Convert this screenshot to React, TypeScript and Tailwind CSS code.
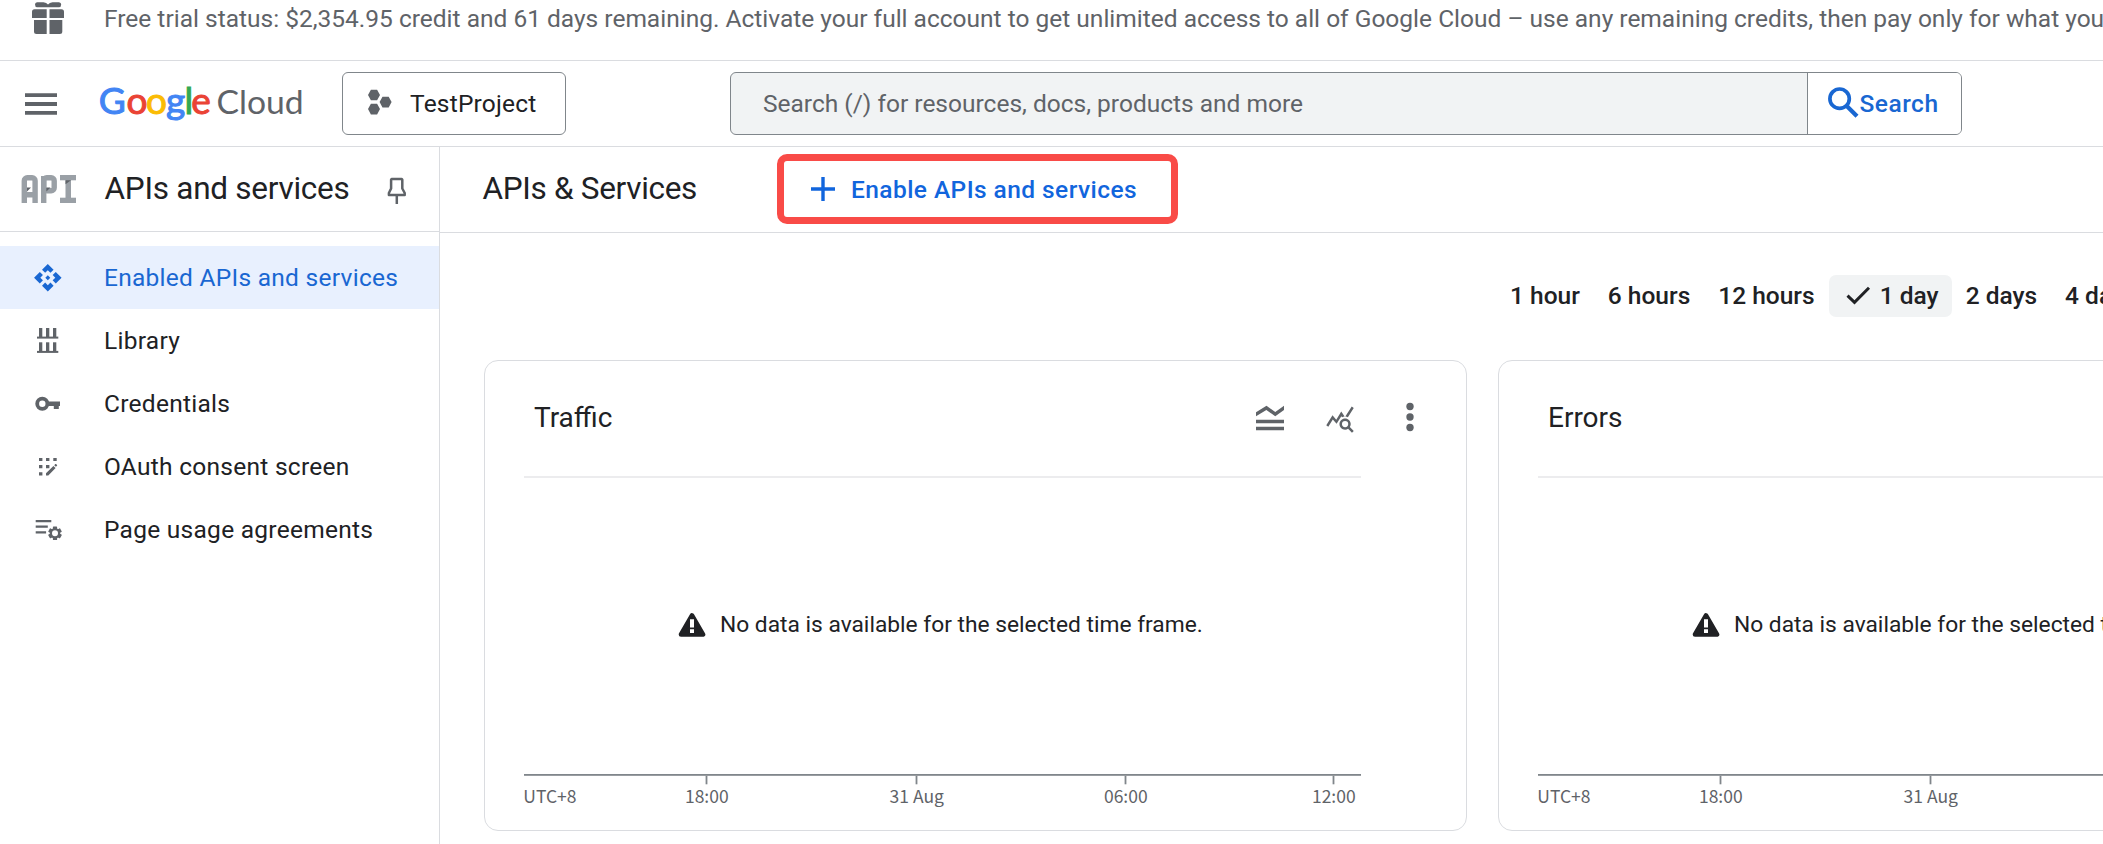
import type { ReactNode } from "react";

type NavItem = { label: string; icon: ReactNode; active?: boolean };

const GearTeeth = () => (
  <>
    {[0, 60, 120].map((a) => (
      <rect key={a} x="52.9" y="28.5" width="4.2" height="13.6" rx="0.6" transform={`rotate(${a} 55 35.3)`} />
    ))}
  </>
);

const navItems: NavItem[] = [
  {
    label: "Enabled APIs and services",
    active: true,
    icon: (
      <g transform="translate(32.8 16.7) scale(1.25)">
        <path d="M14 12l-2 2-2-2 2-2 2 2zm-2-6l2.12 2.12 2.5-2.5L12 1 7.38 5.62l2.5 2.5L12 6zm-6 6l2.12-2.12-2.5-2.5L1 12l4.62 4.62 2.5-2.5L6 12zm12 0l-2.12 2.12 2.5 2.5L23 12l-4.62-4.62-2.5 2.5L18 12zm-6 6l-2.12-2.12-2.5 2.5L12 23l4.62-4.62-2.5-2.5L12 18z" />
      </g>
    ),
  },
  {
    label: "Library",
    icon: (
      <>
        {[19, 33.3].map((y) => (
          <g key={y}>
            <rect x="39" y={y} width="3.3" height="9" />
            <rect x="46" y={y} width="3.3" height="9" />
            <rect x="53" y={y} width="3.3" height="9" />
            <rect x="37" y={y + 8.6} width="21.3" height="2" />
          </g>
        ))}
      </>
    ),
  },
  {
    label: "Credentials",
    icon: (
      <>
        <circle cx="42.3" cy="31.7" r="5.1" fill="none" stroke="currentColor" strokeWidth="3.8" />
        <path d="M48 29.5h12v4.6h-1.2v3h-5v-3H48z" />
      </>
    ),
  },
  {
    label: "OAuth consent screen",
    icon: (
      <>
        <path d="M39 22.9h3.4v3.2H39zM46 22.9h3.4v3.2H46zM53.3 22.9h3.4v3.2h-3.4zM39 30h3.4v3.3H39zM46 30h3.4v3.3H46zM39 37.3h3.4v3.2H39z" />
        <path d="M46 40.6v-2.4l7.4-7.3 2.2 2.2-7.3 7.5zM54.2 30.2l1.1-1.1q.4-.3.8 0l.9.9q.4.4 0 .8l-1.1 1z" />
      </>
    ),
  },
  {
    label: "Page usage agreements",
    icon: (
      <>
        <path d="M35.7 22h15.6v2.2H35.7zM35.7 27.6H47.8v2.2H35.7zM35.7 33.2h10.4v2.2H35.7z" />
        <GearTeeth />
        <circle cx="55" cy="35.3" r="4.1" fill="white" stroke="currentColor" strokeWidth="2.2" />
      </>
    ),
  },
];

const ranges = ["1 hour", "6 hours", "12 hours", "1 day", "2 days", "4 days"];

const ticks = [
  { x: 182.5, label: "18:00" },
  { x: 392.5, label: "31 Aug" },
  { x: 601.5, label: "06:00" },
  { x: 809.5, label: "12:00" },
];

function Banner() {
  return (
    <div className="flex h-[61px] shrink-0 items-start border-b border-[#dadce0] text-[#5f6368]">
      <svg className="ml-[30px] shrink-0" width="36" height="38" viewBox="30 0 36 38" fill="currentColor">
        <path d="M37 2.2h6.5q3 .2 4.5 2.2 1.5-2 4.5-2.2H59q2.2.3 2.2 2.2 0 2.6-2.4 2.8H37.3Q35 7 35 4.4q0-1.900 2-2.200z" />
        <path d="M34.500 9.300h12.200V18H32v-6.200q0-2.500 2.500-2.500zM49.500 9.300h12q2.500 0 2.500 2.500V18H49.500zM34 20h12.700v14H36.500Q34 34 34 31.500zM49.500 20h12.800v11.500q0 2.500-2.500 2.500H49.500z" />
      </svg>
      <p className="ml-[38px] whitespace-nowrap text-[24.500px] leading-[37px]">
        Free trial status: $2,354.95 credit and 61 days remaining. Activate your full account to get unlimited access to
        all of Google Cloud – use any remaining credits, then pay only for what you
      </p>
    </div>
  );
}

function Logo() {
  return (
    <svg className="ml-[41px] shrink-0 overflow-visible" width="206" height="50" viewBox="98 79 206 50" fontFamily="Lato, sans-serif">
      <g fontSize="37" strokeWidth="1">
        <text x="98.700" y="114" fill="#4285f4" stroke="#4285f4">G</text>
        <text x="126.500" y="114" fill="#ea4335" stroke="#ea4335">o</text>
        <text x="146" y="114" fill="#fbbc04" stroke="#fbbc04">o</text>
        <text x="166" y="114" fill="#4285f4" stroke="#4285f4">g</text>
        <text x="184.500" y="114" fill="#34a853" stroke="#34a853">l</text>
        <text x="191.300" y="114" fill="#ea4335" stroke="#ea4335">e</text>
      </g>
      <text x="216.500" y="114" fontSize="33.700" fill="#5f6368">Cloud</text>
    </svg>
  );
}

function Header() {
  return (
    <header className="flex h-[86px] shrink-0 items-center border-b border-[#dadce0]">
      <svg className="ml-[25px] shrink-0 text-[#5f6368]" width="32" height="24" viewBox="25 91 32 24" fill="currentColor">
        <path d="M25 92.200h32v3.800H25zM25 101.100h32v3.800H25zM25 110h32v3.800H25z" />
      </svg>
      <Logo />
      <button className="ml-[38px] flex h-[63px] w-[224px] shrink-0 items-center rounded-[6px] border border-[#80868b] text-[24.500px] tracking-[0.2px] text-[#202124]">
        <svg className="ml-[24px] mb-[4px] shrink-0 text-[#5f6368]" width="26" height="26" viewBox="367 88.500 26 26" fill="currentColor">
          <path d="M368 94.500l2.900-5.300h6.200l2.900 5.300-2.900 5.300h-6.200zM368 108.600l2.900-5.300h6.200l2.900 5.300-2.900 5.300h-6.200zM379.600 101.600l2.900-5.300h6.200l2.900 5.300-2.900 5.300h-6.200z" />
        </svg>
        <span className="ml-[17px] pt-[2px]">TestProject</span>
      </button>
      <div className="ml-[164px] flex h-[63px] w-[1232px] shrink-0 overflow-hidden rounded-[6px] border border-[#80868b] bg-[#f1f3f4]">
        <div className="flex flex-1 items-center pl-[32px] pt-[2px] text-[24.500px] text-[#5f6368]">
          Search (/) for resources, docs, products and more
        </div>
        <button className="flex w-[154px] items-center border-l border-[#80868b] bg-white text-[24.500px] font-medium tracking-[0.5px] text-[#1967d2]">
          <svg className="mb-[2px] ml-[17.500px] shrink-0" width="34" height="34" viewBox="1825 86 34 34" fill="none" stroke="currentColor">
            <circle cx="1838.600" cy="98.700" r="9.700" strokeWidth="3.700" />
            <path d="M1845.500 105.800L1856 116.200" strokeWidth="4.300" />
          </svg>
          <span className="pt-[2px]">Search</span>
        </button>
      </div>
    </header>
  );
}

function ApiIcon() {
  return (
    <svg className="ml-[21px] shrink-0" width="56" height="28" viewBox="21 175 56 28" fill="#9aa0a6">
      <rect x="24.300" y="177.700" width="10.800" height="40" rx="3" fill="none" stroke="#9aa0a6" strokeWidth="5.400" />
      <rect x="26" y="192" width="8" height="5.500" />
      <polygon points="27,187.500 31,187.500 27,191.500" fill="#5f6368" />
      <rect x="41" y="176" width="5.400" height="27" />
      <rect x="43.700" y="177.700" width="10.500" height="13" rx="3" fill="none" stroke="#9aa0a6" strokeWidth="5.400" />
      <polygon points="46.400,187.500 50.500,187.500 46.400,191.500" fill="#5f6368" />
      <rect x="60" y="175" width="16" height="5.300" />
      <rect x="65.500" y="175" width="5.500" height="28" />
      <rect x="60" y="197.700" width="16" height="5.300" />
      <polygon points="65.500,180.300 71,180.300 65.500,184.300" fill="#5f6368" />
    </svg>
  );
}

function Sidebar() {
  return (
    <aside className="flex w-[440px] shrink-0 flex-col border-r border-[#dadce0]">
      <div className="flex h-[85px] items-center border-b border-[#dadce0]">
        <ApiIcon />
        <h2 className="ml-[27.500px] w-[250px] whitespace-nowrap pb-[1px] text-[31.500px] leading-[42px] tracking-[-0.26px] text-[#202124]">
          APIs and services
        </h2>
        <svg className="ml-[32px] mt-[3px] shrink-0 text-[#5f6368]" width="20" height="28" viewBox="387 177 20 28" fill="none" stroke="currentColor" strokeWidth="2.500">
          <path d="M391.800 179h9.800l.7.700v8.800l2.400 4.500v2h-15.800v-2l2.200-4.500v-8.800z" strokeLinejoin="round" />
          <path d="M396.800 195v9" />
        </svg>
      </div>
      <nav className="mt-[14px] flex flex-col">
        {navItems.map((item) => (
          <a
            key={item.label}
            className={
              item.active
                ? "flex h-[63px] items-center bg-[#e8f0fe] text-[#1967d2]"
                : "flex h-[63px] items-center text-[#202124]"
            }
          >
            <svg
              className={item.active ? "ml-[32px] shrink-0" : "ml-[32px] shrink-0 text-[#5f6368]"}
              width="32"
              height="63"
              viewBox="32 0 32 63"
              fill="currentColor"
            >
              {item.icon}
            </svg>
            <span className="ml-[40px] whitespace-nowrap pt-[2px] text-[24.500px] tracking-[0.27px]">{item.label}</span>
          </a>
        ))}
      </nav>
    </aside>
  );
}

function ChartCard({ title }: { title: string }) {
  return (
    <section className="h-[471px] w-[983px] shrink-0 rounded-[14px] border border-[#dadce0]">
      <div className="flex h-[113px] items-center pl-[49px] pr-[35px] text-[#5f6368]">
        <h3 className="flex-1 text-[28px] text-[#202124]">{title}</h3>
        <svg width="42" height="42" viewBox="0 0 24 24" fill="currentColor">
          <path d="M20 15H4v-2h16v2zm0 2H4v2h16v-2zm-5-6l5-3.550V5l-5 3.550L10 5 4 8.660V11l5.920-3.610L15 11z" />
        </svg>
        <svg className="ml-[34px] mt-[2px]" width="30" height="30" viewBox="0 0 24 24" fill="currentColor">
          <path d="M19.880 18.470c.44-.7.7-1.510.7-2.390 0-2.490-2.010-4.500-4.500-4.500s-4.500 2.010-4.500 4.500 2.010 4.500 4.490 4.500c.88 0 1.700-.26 2.390-.7L21.580 23 23 21.580l-3.120-3.110zm-3.800.11a2.500 2.500 0 0 1 0-5 2.500 2.500 0 0 1 0 5zm-.36-8.500c-.74.020-1.450.180-2.100.450l-.55-.83-3.800 6.180-3.010-3.520-3.630 5.810L1 17l5-8 3 3.500L13 6l2.720 4.080zm2.590.5c-.64-.28-1.330-.45-2.050-.49L21.380 2 23 3.180l-4.690 7.400z" />
        </svg>
        <svg className="mb-[2px] ml-[34px]" width="42" height="42" viewBox="0 0 24 24" fill="currentColor">
          <circle cx="12" cy="6" r="2.100" />
          <circle cx="12" cy="12" r="2.100" />
          <circle cx="12" cy="18" r="2.100" />
        </svg>
      </div>
      <div className="ml-[39px] mt-[2px] flex w-[837px] flex-col">
        <div className="h-[2px] bg-[#ececee]" />
        <div className="flex h-[296px] items-center pb-[2px] pl-[154px] text-[#202124]">
          <svg className="shrink-0" width="28" height="26" viewBox="678 612 28 26">
            <path d="M692 615.500L703 634.500H681z" fill="currentColor" stroke="currentColor" strokeWidth="4.600" strokeLinejoin="round" />
            <path d="M690 619.300h4v8.200h-4zM690 629.200h4v3.800h-4z" fill="white" />
          </svg>
          <span className="ml-[14px] whitespace-nowrap pt-[1px] text-[22.750px]">
            No data is available for the selected time frame.
          </span>
        </div>
        <svg width="837" height="40" viewBox="0 0 837 40" fontFamily="'Noto Sans CJK SC', sans-serif" fontSize="17.500" fill="#5f6368">
          <rect x="0" y="0" width="837" height="1.800" fill="#80868b" />
          <text x="-0.700" y="29">UTC+8</text>
          {ticks.map((t) => (
            <g key={t.label}>
              <rect x={t.x - 0.9} y="1.800" width="1.800" height="8.500" fill="#80868b" />
              <text x={t.x + 0.3} y="29" textAnchor="middle">{t.label}</text>
            </g>
          ))}
        </svg>
      </div>
    </section>
  );
}

function Main() {
  return (
    <main className="flex min-w-0 flex-1 flex-col overflow-hidden">
      <div className="flex h-[86px] shrink-0 items-center border-b border-[#dadce0]">
        <h1 className="ml-[42.500px] w-[214.500px] whitespace-nowrap pb-[1px] text-[31.500px] leading-[42px] tracking-[-0.31px] text-[#202124]">
          APIs &amp; Services
        </h1>
        <button className="mb-[1px] ml-[80px] flex h-[70px] w-[401px] shrink-0 items-center rounded-[10px] border-[7px] border-[#f94b47] text-[24.500px] font-medium tracking-[0.43px] text-[#1165dd]">
          <svg className="ml-[27px] shrink-0" width="24" height="24" viewBox="0 0 24 24" fill="currentColor">
            <path d="M10.300 0h3.400v10.300H24v3.400H13.700V24h-3.400V13.700H0v-3.400h10.300z" />
          </svg>
          <span className="ml-[16px] whitespace-nowrap pt-[2px]">Enable APIs and services</span>
        </button>
      </div>
      <div className="ml-[1056px] mt-[42px] flex h-[42px] shrink-0 text-[24.500px] font-medium text-[#202124]">
        {ranges.map((r) =>
          r === "1 day" ? (
            <div key={r} className="flex w-[123px] shrink-0 items-center rounded-[7px] bg-[#f1f3f4]">
              <svg className="ml-[16px] shrink-0" width="26" height="22" viewBox="1844 285 26 22" fill="none" stroke="currentColor" strokeWidth="3">
                <path d="M1846.500 295.700L1853.500 302.300 1868 287.800" />
              </svg>
              <span className="ml-[9px] whitespace-nowrap">{r}</span>
            </div>
          ) : (
            <div key={r} className="flex shrink-0 items-center whitespace-nowrap px-[14px]">
              {r}
            </div>
          ),
        )}
      </div>
      <div className="ml-[44px] mt-[43px] flex gap-[31px]">
        <ChartCard title="Traffic" />
        <ChartCard title="Errors" />
      </div>
    </main>
  );
}

export default function App() {
  return (
    <div className="flex h-[844px] w-full flex-col overflow-hidden bg-white font-[Roboto,sans-serif]">
      <Banner />
      <Header />
      <div className="flex min-h-0 flex-1">
        <Sidebar />
        <Main />
      </div>
    </div>
  );
}
